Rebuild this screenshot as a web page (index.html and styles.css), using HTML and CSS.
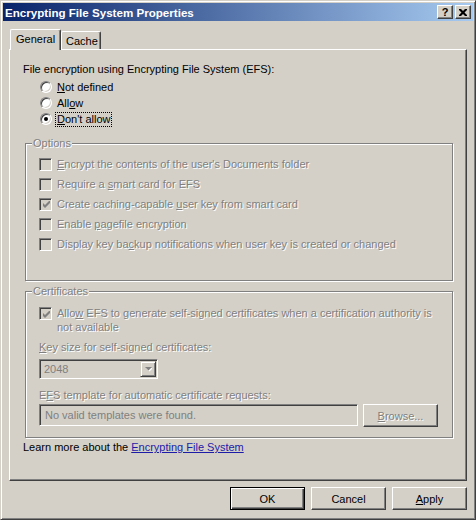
FILE: index.html
```html
<!DOCTYPE html>
<html lang="en">
<head>
  <meta charset="UTF-8" />
  <title>Encrypting File System Properties</title>
  <link rel="stylesheet" href="styles.css">
</head>
<body>

  <div class="window">
    <div class="titlebar">
      <span class="title">Encrypting File System Properties</span>
      <div class="caption-buttons">
        <span class="cap-btn help">?</span>
        <span class="cap-btn close">
          <svg width="8" height="7" viewBox="0 0 8 7">
            <path d="M0 0h2l2 2 2-2h2v1l-2.5 2.5L8 6v1H6L4 5 2 7H0V6l2.5-2.5L0 1z" fill="#000" />
          </svg>
        </span>
      </div>
    </div>

    <div class="tabs">
      <div class="tab active">General</div>
      <div class="tab">Cache</div>
    </div>

    <div class="panel">
      <p class="heading">File encryption using Encrypting File System (EFS):</p>

      <div class="radios">
        <div class="radio-row">
          <span class="radio"></span>
          <span class="radio-text"><u>N</u>ot defined</span>
        </div>
        <div class="radio-row">
          <span class="radio"></span>
          <span class="radio-text">All<u>o</u>w</span>
        </div>
        <div class="radio-row">
          <span class="radio checked"></span>
          <span class="radio-text focus"><u>D</u>on't allow</span>
        </div>
      </div>

      <fieldset class="group">
        <legend class="disabled">Options</legend>
        <div class="group-body options-body">
          <div class="check-row">
            <span class="checkbox"></span>
            <span class="disabled"><u>E</u>ncrypt the contents of the user's Documents folder</span>
          </div>
          <div class="check-row">
            <span class="checkbox"></span>
            <span class="disabled">Require a <u>s</u>mart card for EFS</span>
          </div>
          <div class="check-row">
            <span class="checkbox">
              <svg width="7" height="7" viewBox="0 0 7 7"><path d="M0 2v3l2 2 5-5V-1L2 4z" fill="#808080" /></svg>
            </span>
            <span class="disabled">Create caching-capable <u>u</u>ser key from smart card</span>
          </div>
          <div class="check-row">
            <span class="checkbox"></span>
            <span class="disabled">Enable <u>p</u>agefile encryption</span>
          </div>
          <div class="check-row">
            <span class="checkbox"></span>
            <span class="disabled">Display key ba<u>c</u>kup notifications when user key is created or changed</span>
          </div>
        </div>
      </fieldset>

      <fieldset class="group certs">
        <legend class="disabled">Certificates</legend>
        <div class="group-body certs-body">
          <div class="check-row tall">
            <span class="checkbox">
              <svg width="7" height="7" viewBox="0 0 7 7"><path d="M0 2v3l2 2 5-5V-1L2 4z" fill="#808080" /></svg>
            </span>
            <span class="disabled">Allo<u>w</u> EFS to generate self-signed certificates when a certification authority is<br>not available</span>
          </div>

          <p class="field-label disabled"><u>K</u>ey size for self-signed certificates:</p>
          <div class="select">
            <span class="select-value">2048</span>
            <span class="drop-btn">
              <svg width="7" height="5" viewBox="0 0 7 5">
                <path d="M1 1h7L4.5 4.5z" fill="#fff" />
                <path d="M0 0h7L3.5 3.5z" fill="#808080" />
              </svg>
            </span>
          </div>

          <p class="field-label template-label disabled">E<u>F</u>S template for automatic certificate requests:</p>
          <div class="template-row">
            <div class="textbox">No valid templates were found.</div>
            <div class="button browse"><span class="disabled"><u>B</u>rowse...</span></div>
          </div>
        </div>
      </fieldset>

      <p class="learn">Learn more about the <a href="#">Encrypting File System</a></p>
    </div>

    <div class="dialog-buttons">
      <div class="button default">OK</div>
      <div class="button">Cancel</div>
      <div class="button"><u>A</u>pply</div>
    </div>
  </div>

</body>
</html>
```

FILE: styles.css
```css
body {
  margin: 0;
  padding: 0;
  font-family: 'Liberation Sans', Arial, sans-serif;
  font-size: 11px;
  color: #000;
}

.window {
  box-sizing: border-box;
  width: 476px;
  height: 520px;
  background: #d4d0c8;
  border: 1px solid;
  border-color: #d4d0c8 #404040 #404040 #d4d0c8;
  box-shadow: inset 1px 1px 0 #fff, inset -1px -1px 0 #808080;
  padding: 2px;
  display: flex;
  flex-direction: column;
}

/* title bar */
.titlebar {
  height: 18px;
  background: linear-gradient(to right, #0a246a, #a6caf0);
  display: flex;
  align-items: center;
  justify-content: space-between;
  padding: 0 2px;
}

.title {
  color: #fff;
  font-weight: bold;
  font-size: 11.6px;
}

.caption-buttons {
  display: flex;
  gap: 2px;
}

.cap-btn {
  box-sizing: border-box;
  width: 16px;
  height: 14px;
  background: #d4d0c8;
  border: 1px solid;
  border-color: #fff #404040 #404040 #fff;
  box-shadow: inset -1px -1px 0 #808080;
  display: flex;
  align-items: center;
  justify-content: center;
}

.help {
  font-weight: bold;
  font-size: 11px;
  line-height: 12px;
}

/* tabs */
.tabs {
  display: flex;
  align-items: flex-end;
  height: 20px;
  margin: 8px 0 0 7px;
}

.tab {
  box-sizing: border-box;
  height: 18px;
  width: 40px;
  padding: 3px 0 0 4px;
  line-height: 13px;
  background: #d4d0c8;
  border: 1px solid;
  border-bottom: none;
  border-color: #fff #404040 #404040 #fff;
  border-radius: 2px 2px 0 0;
  box-shadow: inset -1px 0 0 #808080;
}

.tab.active {
  position: relative;
  z-index: 1;
  width: 51px;
  height: 21px;
  margin-bottom: -1px;
  padding: 3px 0 0 5px;
}

/* panel */
.panel {
  box-sizing: border-box;
  height: 432px;
  margin: 0 6px;
  padding: 13px 13px 0 13px;
  border: 1px solid;
  border-color: #fff #404040 #404040 #fff;
  box-shadow: inset -1px -1px 0 #808080;
}

.heading {
  margin: 0;
  line-height: 13px;
}

.radios {
  margin-top: 3px;
}

.radio-row {
  display: flex;
  align-items: center;
  height: 16px;
  padding-left: 17px;
}

.radio {
  box-sizing: border-box;
  width: 12px;
  height: 12px;
  border-radius: 50%;
  background: #fff;
  border: 1px solid;
  border-color: #808080 #fff #fff #808080;
  box-shadow: inset 1px 1px 0 #404040, inset -1px -1px 0 #d4d0c8;
  display: flex;
  align-items: center;
  justify-content: center;
}

.radio.checked::after {
  content: '';
  width: 4px;
  height: 4px;
  border-radius: 50%;
  background: #000;
}

.radio-text {
  margin-left: 3px;
  padding: 0 1px;
  line-height: 13px;
  border: 1px dotted transparent;
}

.radio-text.focus {
  border-color: #000;
}

.disabled {
  color: #808080;
  text-shadow: 1px 1px 0 #fff;
}

/* group boxes */
.group {
  margin: 10px 0 0 2px;
  padding: 0;
  min-width: 0;
  border: 1px solid #808080;
  box-shadow: 1px 1px 0 #fff, inset 1px 1px 0 #fff;
}

.group legend {
  margin-left: 6px;
  padding: 0 1px;
  line-height: 13px;
  background: #d4d0c8;
}

.group.certs {
  margin-top: 4px;
}

.group-body {
  padding-left: 13px;
}

.options-body {
  padding-top: 4px;
  padding-bottom: 26px;
}

.certs-body {
  padding-top: 8px;
  padding-bottom: 10px;
}

.check-row {
  display: flex;
  align-items: center;
  height: 20px;
  gap: 5px;
}

.check-row.tall {
  height: auto;
  align-items: flex-start;
  line-height: 14px;
}

.check-row.tall .checkbox {
  margin-top: 1px;
}

.checkbox {
  box-sizing: border-box;
  flex: none;
  width: 13px;
  height: 13px;
  border: 1px solid;
  border-color: #808080 #fff #fff #808080;
  box-shadow: inset 1px 1px 0 #404040, inset -1px -1px 0 #d4d0c8;
  display: flex;
  align-items: center;
  justify-content: center;
}

.checkbox svg {
  margin: 1px 0 0 1px;
}

.field-label {
  margin: 7px 0 0;
  line-height: 13px;
}

.template-label {
  margin-top: 10px;
}

.select {
  box-sizing: border-box;
  width: 119px;
  height: 20px;
  margin-top: 5px;
  border: 1px solid;
  border-color: #808080 #fff #fff #808080;
  box-shadow: inset 1px 1px 0 #404040, inset -1px -1px 0 #d4d0c8;
  padding: 1px;
  display: flex;
  align-items: center;
  justify-content: space-between;
}

.select-value {
  color: #808080;
  padding-left: 3px;
}

.drop-btn {
  box-sizing: border-box;
  width: 16px;
  height: 16px;
  border: 1px solid;
  border-color: #d4d0c8 #404040 #404040 #d4d0c8;
  box-shadow: inset 1px 1px 0 #fff, inset -1px -1px 0 #808080;
  display: flex;
  align-items: center;
  justify-content: center;
}

.template-row {
  display: flex;
  align-items: flex-start;
  gap: 5px;
  margin-top: 2px;
}

.textbox {
  box-sizing: border-box;
  width: 319px;
  height: 22px;
  padding: 4px 0 0 5px;
  line-height: 13px;
  color: #808080;
  border: 1px solid;
  border-color: #808080 #fff #fff #808080;
  box-shadow: inset 1px 1px 0 #404040, inset -1px -1px 0 #d4d0c8;
}

/* push buttons */
.button {
  box-sizing: border-box;
  width: 75px;
  height: 23px;
  display: flex;
  align-items: center;
  justify-content: center;
  border: 1px solid;
  border-color: #fff #404040 #404040 #fff;
  box-shadow: inset -1px -1px 0 #808080;
}

.button.default {
  border-color: #000;
  box-shadow: inset 1px 1px 0 #fff, inset -1px -1px 0 #404040, inset -2px -2px 0 #808080;
}

.learn {
  margin: 3px 0 0;
  line-height: 13px;
}

.learn a {
  color: #1c1ca8;
}

.dialog-buttons {
  display: flex;
  justify-content: flex-end;
  gap: 6px;
  margin: 6px 6px 0 0;
}
```
